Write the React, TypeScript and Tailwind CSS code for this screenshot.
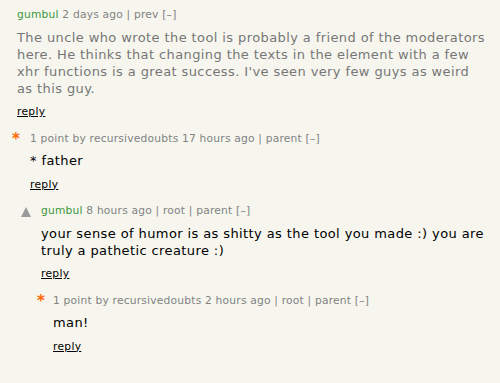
import React from "react";

type CommentProps = {
  indent: number;
  vote?: "star" | "up" | null;
  voteWidth: number;
  head: React.ReactNode;
  children: React.ReactNode;
  faded?: boolean;
};

function Comment({ indent, vote, voteWidth, head, children, faded }: CommentProps) {
  return (
    <div className="flex mb-[13.5px]" style={{ paddingLeft: indent }}>
      <div className="shrink-0" style={{ width: voteWidth }}>
        {vote === "star" && (
          <span className="block text-[15px] leading-[14px] font-bold text-[#ff6600]">*</span>
        )}
        {vote === "up" && (
          <svg width="10" height="10" viewBox="0 0 10 10" className="mt-[3px]">
            <polygon points="5,0 10,10 0,10" fill="#9a9a9a" />
          </svg>
        )}
      </div>
      <div className="flex-1 pr-3">
        <div className="text-[10.7px] leading-[13px] tracking-[0.2px] text-[#828282]">{head}</div>
        <div
          className={
            "mt-[7.5px] text-[13px] leading-[17px] tracking-[0.4px] " +
            (faded ? "text-[#767676]" : "text-black")
          }
        >
          {children}
        </div>
        <div className="mt-[8.5px] text-[10.7px] leading-[13px] tracking-[0.3px] text-black underline">
          reply
        </div>
      </div>
    </div>
  );
}

export default function App() {
  return (
    <div
      className="w-[500px] h-[383px] bg-[#f6f6ef] pt-[8px] overflow-hidden"
      style={{ fontFamily: '"DejaVu Sans", Verdana, sans-serif' }}
    >
      <Comment
        indent={17}
        voteWidth={0}
        faded
        head={
          <>
            <span className="text-[#3c963c]">gumbul</span> 2 days ago | prev [–]
          </>
        }
      >
        The uncle who wrote the tool is probably a friend of the moderators here. He thinks that
        changing the texts in the element with a few xhr functions is a great success. I've seen
        very few guys as weird as this guy.
      </Comment>
      <Comment
        indent={12}
        vote="star"
        voteWidth={18}
        head={<>1 point by recursivedoubts 17 hours ago | parent [–]</>}
      >
        * father
      </Comment>
      <Comment
        indent={21}
        vote="up"
        voteWidth={20}
        head={
          <>
            <span className="text-[#3c963c]">gumbul</span> 8 hours ago | root | parent [–]
          </>
        }
      >
        your sense of humor is as shitty as the tool you made :) you are truly a pathetic creature :)
      </Comment>
      <Comment
        indent={37}
        vote="star"
        voteWidth={16}
        head={<>1 point by recursivedoubts 2 hours ago | root | parent [–]</>}
      >
        man!
      </Comment>
    </div>
  );
}
